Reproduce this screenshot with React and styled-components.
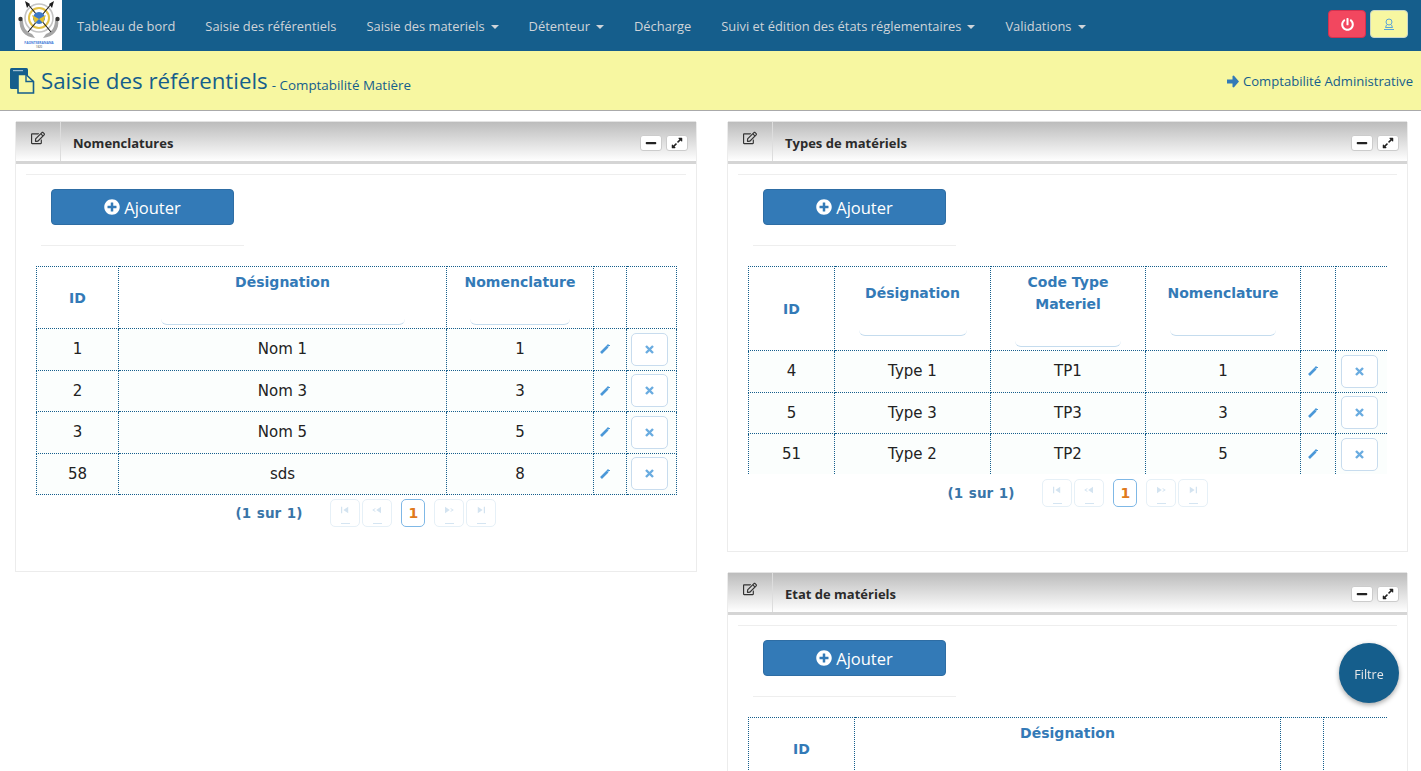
import React from 'react'
import styled, { createGlobalStyle } from 'styled-components'
import { FaExpandAlt, FaMinus, FaPlusCircle, FaPowerOff, FaRegEdit } from 'react-icons/fa'

const BLUE = '#155e8c'
const UI = '"Open Sans", "Noto Sans", sans-serif'
const WIDE = '"DejaVu Sans", "Liberation Sans", sans-serif'

const GlobalStyle = createGlobalStyle`
    html, body {
        margin: 0;
        height: 771px;
        overflow: hidden;
        background: #fff;
        font-family: ${UI};
    }
    * { box-sizing: border-box; }
`

const panels = {
    nomenclatures: {
        title: 'Nomenclatures',
        height: 450,
        columns: [
            { label: 'ID', width: 82 },
            { label: 'Désignation', width: 328, filter: 244 },
            { label: 'Nomenclature', width: 147, filter: 100 },
            { width: 33 },
            { width: 50 }
        ],
        rows: [
            ['1', 'Nom 1', '1'],
            ['2', 'Nom 3', '3'],
            ['3', 'Nom 5', '5'],
            ['58', 'sds', '8']
        ],
        headHeight: 61
    },
    types: {
        title: 'Types de matériels',
        height: 430,
        clip: 208,
        clipWidth: 639,
        columns: [
            { label: 'ID', width: 86 },
            { label: 'Désignation', width: 156, filter: 108 },
            { label: 'Code Type Materiel', width: 155, filter: 106 },
            { label: 'Nomenclature', width: 155, filter: 106 },
            { width: 35 },
            { width: 53 }
        ],
        rows: [
            ['4', 'Type 1', 'TP1', '1'],
            ['5', 'Type 3', 'TP3', '3'],
            ['51', 'Type 2', 'TP2', '5']
        ],
        headHeight: 83
    },
    etats: {
        title: 'Etat de matériels',
        height: 300,
        clipWidth: 639,
        columns: [
            { label: 'ID', width: 106 },
            { label: 'Désignation', width: 426, filter: 300 },
            { width: 43 },
            { width: 65 }
        ],
        rows: [],
        headHeight: 61,
        noPager: true
    }
}

function Logo () {
    return (
        <LogoBox>
            <svg width="47" height="50" viewBox="0 0 47 50">
                <path d="M5 19 C3 30 10 37 20 38 L17 34 C11 32 8 27 8 20Z" fill="#a6a6a6" />
                <path d="M43 19 C45 30 38 37 28 38 L31 34 C37 32 40 27 40 20Z" fill="#a6a6a6" />
                <circle cx="5.5" cy="19" r="2.2" fill="#333" />
                <circle cx="42.5" cy="19" r="2.2" fill="#333" />
                <circle cx="24" cy="18" r="14" fill="none" stroke="#c4c4c4" strokeWidth="1.6" />
                <circle cx="24" cy="18" r="10" fill="none" stroke="#e2c24a" strokeWidth="2" />
                <path d="M12 3 L36 32 M37 3 L13 32" stroke="#1d1d1d" strokeWidth="1.1" />
                <path d="M10 1 L15 4 L12 8Z M39 1 L34 4 L37 8Z" fill="#1d1d1d" />
                <circle cx="24" cy="18" r="6" fill="#3c78c8" />
                <path d="M17 15 L24 19 L20 23Z M31 15 L24 19 L28 23Z" fill="#e3c02f" />
                <text x="24" y="43.5" fontSize="3.3" textAnchor="middle" fill="#3c78d8" fontWeight="700" fontFamily={UI}>FAONTSERANANA</text>
                <text x="24" y="48" fontSize="2.8" textAnchor="middle" fill="#444" fontFamily={UI}>1820</text>
            </svg>
        </LogoBox>
    )
}

function Navbar () {
    const links = [
        ['Tableau de bord'],
        ['Saisie des référentiels'],
        ['Saisie des materiels', true],
        ['Détenteur', true],
        ['Décharge'],
        ['Suivi et édition des états réglementaires', true],
        ['Validations', true]
    ]
    return (
        <Nav>
            <Logo />
            <NavLinks>
                {links.map(([label, drop]) => (
                    <NavLink key={label}>
                        {label}
                        {drop && <Caret />}
                    </NavLink>
                ))}
            </NavLinks>
            <NavButtons>
                <NavButton $variant="danger"><FaPowerOff size={13} /></NavButton>
                <NavButton>
                    <svg width="14" height="14" viewBox="0 0 14 14" fill="none" stroke="#5aa5d8" strokeWidth="1">
                        <circle cx="7" cy="5" r="3" />
                        <path d="M4.5 8 L3.5 10.5 H10.5 L9.5 8 M2 12.5 H12" />
                    </svg>
                </NavButton>
            </NavButtons>
        </Nav>
    )
}

function PagesIcon () {
    return (
        <svg width="25" height="26" viewBox="0 0 25 26">
            <rect x="0" y="0" width="18" height="21" rx="1.5" fill={BLUE} />
            <rect x="3" y="2" width="10" height="1.2" fill="#9dbccf" />
            <path d="M8 6.5 H16 L23.5 13.5 V25 H8Z" fill="#f7f7a1" stroke={BLUE} strokeWidth="1.6" />
            <path d="M16 6.5 V13.5 H23.5" fill="none" stroke={BLUE} strokeWidth="1.4" />
        </svg>
    )
}

function PagerIcon ({ kind }) {
    const shapes = {
        first: 'M1 1v8h1.5V1z M4 5l6-4v8z',
        prev: 'M0 5 L4 2.5 V3.8 L2 5 L4 6.2 V7.5Z M5 5 L11 1 V9Z',
        next: 'M1 1 L7 5 L1 9Z M8 2.5 L12 5 L8 7.5 V6.2 L10 5 L8 3.8Z',
        last: 'M2 1 L8 5 L2 9Z M9.5 1v8H11V1z'
    }
    return (
        <PagerGlyph>
            <svg width="12" height="8" viewBox="0 0 12 10" fill="#d3e3f0"><path d={shapes[kind]} /></svg>
            <PagerDash />
        </PagerGlyph>
    )
}

function Pager () {
    return (
        <PagerRow>
            <PagerCount>(1 sur 1)</PagerCount>
            <PagerGroup>
                <PagerButton><PagerIcon kind="first" /></PagerButton>
                <PagerButton><PagerIcon kind="prev" /></PagerButton>
            </PagerGroup>
            <PagerCurrent>1</PagerCurrent>
            <PagerGroup>
                <PagerButton><PagerIcon kind="next" /></PagerButton>
                <PagerButton><PagerIcon kind="last" /></PagerButton>
            </PagerGroup>
        </PagerRow>
    )
}

function DataTable ({ columns, rows, headHeight, clip, clipWidth }) {
    return (
        <TableClip $height={clip} $width={clipWidth}>
            <Table>
                <colgroup>
                    {columns.map((col, i) => <col key={i} style={{ width: col.width }} />)}
                </colgroup>
                <thead>
                    <tr style={{ height: headHeight }}>
                        {columns.map((col, i) => (
                            <HeadCell key={i}>
                                {col.label && <HeadLabel>{col.label}</HeadLabel>}
                                {col.filter && <FilterInput $width={col.filter} />}
                            </HeadCell>
                        ))}
                    </tr>
                </thead>
                <tbody>
                    {rows.map((row) => (
                        <BodyRow key={row[0]}>
                            {row.map((value, i) => <Cell key={i}>{value}</Cell>)}
                            <EditCell>
                                <svg width="11" height="11" viewBox="0 0 11 11" fill="none" stroke="#4a98d8">
                                    <path d="M1 10 L7.5 3.5" strokeWidth="2.6" />
                                    <path d="M8 1 V4 M6.8 2.5 H10" strokeWidth="1" />
                                </svg>
                            </EditCell>
                            <ActionCell>
                                <DeleteButton>
                                    <svg width="9" height="9" viewBox="0 0 9 9" stroke="#6aace0" strokeWidth="2.4">
                                        <path d="M1 1 L8 8 M8 1 L1 8" />
                                    </svg>
                                </DeleteButton>
                            </ActionCell>
                        </BodyRow>
                    ))}
                </tbody>
            </Table>
        </TableClip>
    )
}

function Panel ({ data }) {
    return (
        <PanelBox $height={data.height}>
            <PanelHead>
                <PanelIcon><FaRegEdit size={14} /></PanelIcon>
                <PanelTitle>{data.title}</PanelTitle>
                <PanelTools>
                    <ToolButton><FaMinus size={12} /></ToolButton>
                    <ToolButton><FaExpandAlt size={12} /></ToolButton>
                </PanelTools>
            </PanelHead>
            <PanelBody>
                <TopRule />
                <AddButton><FaPlusCircle size={16} /> Ajouter</AddButton>
                <ShortRule />
                <DataTable {...data} />
                {!data.noPager && <Pager />}
            </PanelBody>
        </PanelBox>
    )
}

export default function App () {
    return (
        <>
            <GlobalStyle />
            <Navbar />
            <SubHeader>
                <PageTitle>
                    <PagesIcon />
                    <PageName>Saisie des référentiels</PageName>
                    <PageSub>- Comptabilité Matière</PageSub>
                </PageTitle>
                <SwitchLink>
                    <svg width="12" height="13" viewBox="0 0 12 13" fill="#337ab7">
                        <path d="M0 4.5 H5.5 V1 L6.8 0.5 L12 6.5 L6.8 12.5 L5.5 12 V8.5 H0Z" />
                    </svg>
                    Comptabilité Administrative
                </SwitchLink>
            </SubHeader>
            <Content>
                <Column>
                    <Panel data={panels.nomenclatures} />
                </Column>
                <Column>
                    <Panel data={panels.types} />
                    <Panel data={panels.etats} />
                </Column>
            </Content>
            <Fab>Filtre</Fab>
        </>
    )
}

const Nav = styled.nav`
    display: flex;
    align-items: flex-start;
    height: 51px;
    padding: 0 13px 0 15px;
    background: ${BLUE};
`

const LogoBox = styled.div`
    width: 47px;
    height: 50px;
    background: #fff;
    flex: none;
`

const NavLinks = styled.div`
    display: flex;
`

const NavLink = styled.a`
    display: flex;
    align-items: center;
    height: 51px;
    padding: 1px 15px 0;
    color: #cfd4d9;
    font-size: 12.9px;
    white-space: nowrap;
`

const Caret = styled.span`
    margin: 2px 0 0 6px;
    border-top: 4px solid #cfd4d9;
    border-left: 4px solid transparent;
    border-right: 4px solid transparent;
`

const NavButtons = styled.div`
    display: flex;
    gap: 4px;
    margin: 10px 0 0 auto;
`

const NavButton = styled.button`
    display: flex;
    align-items: center;
    justify-content: center;
    width: 38px;
    height: 28px;
    padding: 0;
    border-radius: 4px;
    border: 1px solid ${(p) => (p.$variant === 'danger' ? '#d4314f' : '#c9d6c8')};
    background: ${(p) => (p.$variant === 'danger' ? '#f2475f' : '#f7f7a1')};
    color: #fff;
`

const SubHeader = styled.header`
    display: flex;
    align-items: flex-start;
    justify-content: space-between;
    height: 60px;
    padding: 14px 8px 0 10px;
    background: #f7f7a1;
    border-bottom: 1px solid #aaa;
    color: ${BLUE};
`

const PageTitle = styled.div`
    display: flex;
    align-items: center;
    height: 32px;
    white-space: nowrap;
`

const PageName = styled.span`
    margin: -2px 0 0 6px;
    font-size: 22.3px;
`

const PageSub = styled.span`
    margin: 7px 0 0 4px;
    font-size: 13.4px;
`

const SwitchLink = styled.a`
    display: flex;
    align-items: center;
    gap: 4px;
    height: 32px;
    font-size: 13.1px;
    color: ${BLUE};
    white-space: nowrap;
`

const Content = styled.main`
    display: grid;
    grid-template-columns: 682px 681px;
    column-gap: 30px;
    align-items: start;
    padding: 11px 0 0 15px;
`

const Column = styled.div`
    display: flex;
    flex-direction: column;
    gap: 21px;
`

const PanelBox = styled.section`
    height: ${(p) => p.$height}px;
    background: #fff;
    border: 1px solid #ececec;
    border-top: none;
`

const PanelHead = styled.div`
    display: flex;
    align-items: stretch;
    height: 42px;
    background: linear-gradient(to bottom, #bcbcbc, #fff);
    border-bottom: 3px solid #d5d5d5;
    box-shadow: 0 -1px 0 #e4e4e4;
`

const PanelIcon = styled.div`
    display: flex;
    justify-content: center;
    width: 45px;
    padding-top: 9px;
    border-right: 1px solid #ddd;
    color: #333;
`

const PanelTitle = styled.h3`
    margin: 0;
    padding: 12px 0 0 12px;
    font-size: 13px;
    font-weight: 700;
    color: #2b2b2b;
`

const PanelTools = styled.div`
    display: flex;
    gap: 4px;
    margin: 13px 8px 0 auto;
`

const ToolButton = styled.button`
    display: flex;
    align-items: center;
    justify-content: center;
    width: 22px;
    height: 16px;
    padding: 0;
    border: 1px solid #ccc;
    border-radius: 3px;
    background: #fff;
    color: #222;
`

const PanelBody = styled.div`
    padding: 10px 20px 0 20px;
`

const TopRule = styled.hr`
    margin: 0 -10px 14px -10px;
    border: none;
    border-top: 1px solid #eee;
`

const AddButton = styled.button`
    display: flex;
    align-items: center;
    justify-content: center;
    gap: 4px;
    width: 183px;
    height: 36px;
    margin-left: 15px;
    border: 1px solid #2e6da4;
    border-radius: 4px;
    background: #337ab7;
    color: #fff;
    font-family: ${UI};
    font-size: 16.5px;
`

const ShortRule = styled.hr`
    width: 203px;
    margin: 20px 0 20px 5px;
    border: none;
    border-top: 1px solid #eee;
`

const TableClip = styled.div`
    width: ${(p) => p.$width || 641}px;
    overflow: hidden;
    ${(p) => p.$height && `height: ${p.$height}px; margin-bottom: 5px;`}
`

const Table = styled.table`
    width: 640px;
    table-layout: fixed;
    border-collapse: collapse;
    font-family: ${WIDE};
`

const HeadCell = styled.th`
    padding: 4px 10px 3px;
    border: 1px dotted ${BLUE};
    text-align: center;
    vertical-align: middle;
    background: #fff;
`

const HeadLabel = styled.div`
    font-size: 14px;
    line-height: 22px;
    font-weight: 700;
    color: #337ab7;
`

const FilterInput = styled.div`
    width: ${(p) => p.$width}px;
    max-width: 100%;
    height: 26px;
    margin: 6px auto 0;
    border-bottom: 1px solid #c5dcee;
    border-radius: 0 0 6px 6px;
`

const BodyRow = styled.tr`
    height: 41.5px;
    background: #fbfefd;
`

const Cell = styled.td`
    padding: 0;
    border: 1px dotted ${BLUE};
    text-align: center;
    font-size: 15px;
    color: #222;
`

const EditCell = styled(Cell)`
    padding-right: 9px;
`

const ActionCell = styled(Cell)`
    padding-right: 5px;
`

const DeleteButton = styled.button`
    display: inline-flex;
    align-items: center;
    justify-content: center;
    width: 37px;
    height: 33px;
    padding: 0;
    vertical-align: middle;
    border: 1px solid #c8dcee;
    border-radius: 5px;
    background: #fff;
`

const PagerRow = styled.div`
    display: flex;
    align-items: center;
    justify-content: center;
    width: 640px;
    margin-top: 4px;
    padding-left: 20px;
    font-family: ${WIDE};
`

const PagerCount = styled.span`
    margin-right: 28px;
    font-size: 13.5px;
    font-weight: 700;
    word-spacing: 1px;
    color: #3a75a8;
`

const PagerGroup = styled.div`
    display: flex;
    gap: 2px;
`

const PagerButton = styled.div`
    display: flex;
    align-items: center;
    justify-content: center;
    width: 30px;
    height: 28px;
    border: 1px solid #e6f0f7;
    border-radius: 5px;
`

const PagerGlyph = styled.div`
    display: flex;
    flex-direction: column;
    align-items: center;
    gap: 9px;
    margin-top: 4px;
`

const PagerDash = styled.span`
    width: 9px;
    height: 1px;
    background: #d5e5f2;
`

const PagerCurrent = styled.div`
    display: flex;
    align-items: center;
    justify-content: center;
    width: 24px;
    height: 28px;
    margin: 0 9px;
    border: 1px solid #7fb8e6;
    border-radius: 5px;
    font-size: 14px;
    font-weight: 700;
    color: #e07a1c;
`

const Fab = styled.button`
    position: fixed;
    left: 1339px;
    top: 643px;
    width: 60px;
    height: 60px;
    padding: 2px 0 0;
    border: none;
    border-radius: 50%;
    background: ${BLUE};
    box-shadow: 0 2px 5px rgba(0, 0, 0, .35);
    color: #e8e8e8;
    font-family: ${UI};
    font-size: 12.5px;
`
